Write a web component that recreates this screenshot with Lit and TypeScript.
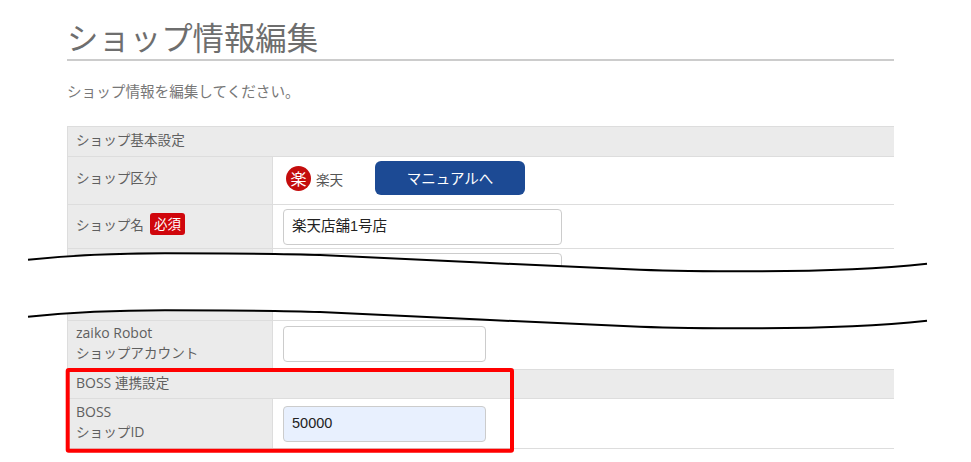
import { LitElement, html, css, svg } from "lit";
import { customElement } from "lit/decorators.js";

const curve = (o: number) =>
  `M28 ${259.7 + o} C 70 ${255.5 + o} 120 ${253.3 + o} 165 ${253.3 + o} ` +
  `C 230 ${253.3 + o} 280 ${253.3 + o} 320 ${255 + o} ` +
  `C 400 ${258.8 + o} 560 ${266.5 + o} 640 ${269.7 + o} ` +
  `C 680 ${271.2 + o} 720 ${271.3 + o} 750 ${271.3 + o} ` +
  `C 820 ${271.3 + o} 880 ${268.7 + o} 927 ${263.7 + o}`;
const reverse = (o: number) =>
  `L927 ${263.7 + o} C 880 ${268.7 + o} 820 ${271.3 + o} 750 ${271.3 + o} ` +
  `C 720 ${271.3 + o} 680 ${271.2 + o} 640 ${269.7 + o} ` +
  `C 560 ${266.5 + o} 400 ${258.8 + o} 320 ${255 + o} ` +
  `C 280 ${253.3 + o} 230 ${253.3 + o} 165 ${253.3 + o} ` +
  `C 120 ${253.3 + o} 70 ${255.5 + o} 28 ${259.7 + o} Z`;
const TOP = curve(0);
const BOTTOM = curve(57);
const BAND = TOP + " " + reverse(57);

@customElement("app-root")
export class AppRoot extends LitElement {
  static styles = css`
    :host {
      display: block;
      position: relative;
      width: 971px;
      height: 462px;
      overflow: hidden;
      background: #fff;
      font-family: "Noto Sans CJK JP", "Open Sans", sans-serif;
      color: #666;
      box-sizing: border-box;
    }
    .page {
      padding: 0 77px 0 67px;
    }
    h1 {
      margin: 0;
      box-sizing: border-box;
      padding-top: 14px;
      font-size: 31.4px;
      line-height: 46px;
      font-weight: 400;
      color: #6e6e6e;
      border-bottom: 2px solid #ccc;
      height: 61px;
    }
    .lead {
      margin: 0;
      padding-top: 20px;
      height: 65px;
      box-sizing: border-box;
      font-size: 14.6px;
      line-height: 20px;
      color: #777;
    }
    .table {
      border-top: 1px solid #ddd;
      display: flex;
      flex-direction: column;
    }
    .head {
      height: 29px;
      box-sizing: border-box;
      background: #ebebeb;
      border-bottom: 1px solid #ddd;
      border-left: 1px solid #ddd;
      padding: 0 0 5px 8px;
      display: flex;
      align-items: center;
      font-size: 13.6px;
      color: #5f5f5f;
      white-space: pre;
    }
    .head.first {
      height: 30px;
    }
    .row {
      display: grid;
      grid-template-columns: 206px 1fr;
      box-sizing: border-box;
      border-bottom: 1px solid #ddd;
    }
    .label {
      background: #ebebeb;
      border-left: 1px solid #ddd;
      border-right: 1px solid #ddd;
      padding: 0 0 5px 8px;
      display: flex;
      align-items: center;
      font-size: 13.6px;
      line-height: 20px;
      color: #5f5f5f;
    }
    .label.raised {
      padding-bottom: 7px;
    }
    .label.tight {
      padding-bottom: 3px;
    }
    .latin {
      font-family: "Open Sans", sans-serif;
      font-size: 14px;
    }
    .stack span.line {
      display: block;
    }
    .stack span.line + span.line {
      margin-top: -1px;
    }
    .h48 { height: 48px; }
    .h44 { height: 44px; }
    .h72 { height: 72px; }
    .h49 { height: 49px; }
    .h50 { height: 50px; }
    .cell {
      display: flex;
      align-items: center;
      padding-left: 10px;
    }
    .cell.shop {
      padding-bottom: 4px;
    }
    .cell.name {
      padding-top: 1px;
    }
    .cell.lift {
      padding-bottom: 2px;
    }
    .cell.top {
      align-items: flex-start;
      padding-top: 4px;
    }
    .brand {
      display: flex;
      align-items: center;
      width: 89px;
      margin-left: 3px;
      gap: 5px;
      font-size: 13.6px;
      color: #555;
    }
    .logo {
      width: 25px;
      height: 25px;
      border-radius: 50%;
      background: #c40d0d;
      color: #fff;
      font-size: 16px;
      line-height: 25px;
      text-align: center;
      flex: none;
    }
    .btn {
      width: 150px;
      height: 34px;
      margin-bottom: 2px;
      border-radius: 6px;
      background: #1c4a94;
      color: #fff;
      font-size: 14.5px;
      display: flex;
      align-items: center;
      justify-content: center;
    }
    .badge {
      display: inline-block;
      margin-left: 6px;
      background: #d0060c;
      color: #fff;
      border-radius: 3px;
      font-size: 13.5px;
      line-height: 21px;
      height: 22px;
      width: 35px;
      text-align: center;
    }
    .input {
      box-sizing: border-box;
      height: 36px;
      border: 1px solid #ccc;
      border-radius: 4px;
      background: #fff;
      padding-left: 8px;
      padding-bottom: 2px;
      display: flex;
      align-items: center;
      font-family: "Liberation Sans", "Noto Sans CJK JP", sans-serif;
      font-size: 14.5px;
      color: #222;
    }
    .name .input {
      padding-bottom: 5px;
    }
    .wide { width: 279px; }
    .narrow { width: 203px; }
    .filled { background: #e8f0fe; }
    .wave {
      position: absolute;
      inset: 0;
      width: 971px;
      height: 462px;
      pointer-events: none;
    }
  `;

  render() {
    return html`
      <div class="page">
        <h1>ショップ情報編集</h1>
        <p class="lead">ショップ情報を編集してください。</p>
        <div class="table">
          <div class="head first">ショップ基本設定</div>
          <div class="row h48">
            <div class="label raised">ショップ区分</div>
            <div class="cell shop">
              <div class="brand"><span class="logo">楽</span>楽天</div>
              <div class="btn">マニュアルへ</div>
            </div>
          </div>
          <div class="row h44">
            <div class="label">ショップ名<span class="badge">必須</span></div>
            <div class="cell name"><div class="input wide">楽天店舗1号店</div></div>
          </div>
          <div class="row h72">
            <div class="label"></div>
            <div class="cell top"><div class="input wide"></div></div>
          </div>
          <div class="row h49">
            <div class="label">
              <div class="stack"><span class="line latin">zaiko Robot</span><span class="line">ショップアカウント</span></div>
            </div>
            <div class="cell lift"><div class="input narrow"></div></div>
          </div>
          <div class="head"><span><span class="latin">BOSS </span>連携設定</span></div>
          <div class="row h50">
            <div class="label tight">
              <div class="stack"><span class="line latin">BOSS</span><span class="line">ショップ<span class="latin">ID</span></span></div>
            </div>
            <div class="cell"><div class="input narrow filled">50000</div></div>
          </div>
        </div>
      </div>
      <svg class="wave" viewBox="0 0 971 462">
        ${svg`
          <path d=${BAND} fill="#fff"></path>
          <path d=${TOP} fill="none" stroke="#000" stroke-width="2"></path>
          <path d=${BOTTOM} fill="none" stroke="#000" stroke-width="2"></path>
          <rect x="67.7" y="370" width="444.3" height="80.7" rx="1" fill="none" stroke="#f00" stroke-width="4"></rect>
        `}
      </svg>
    `;
  }
}
